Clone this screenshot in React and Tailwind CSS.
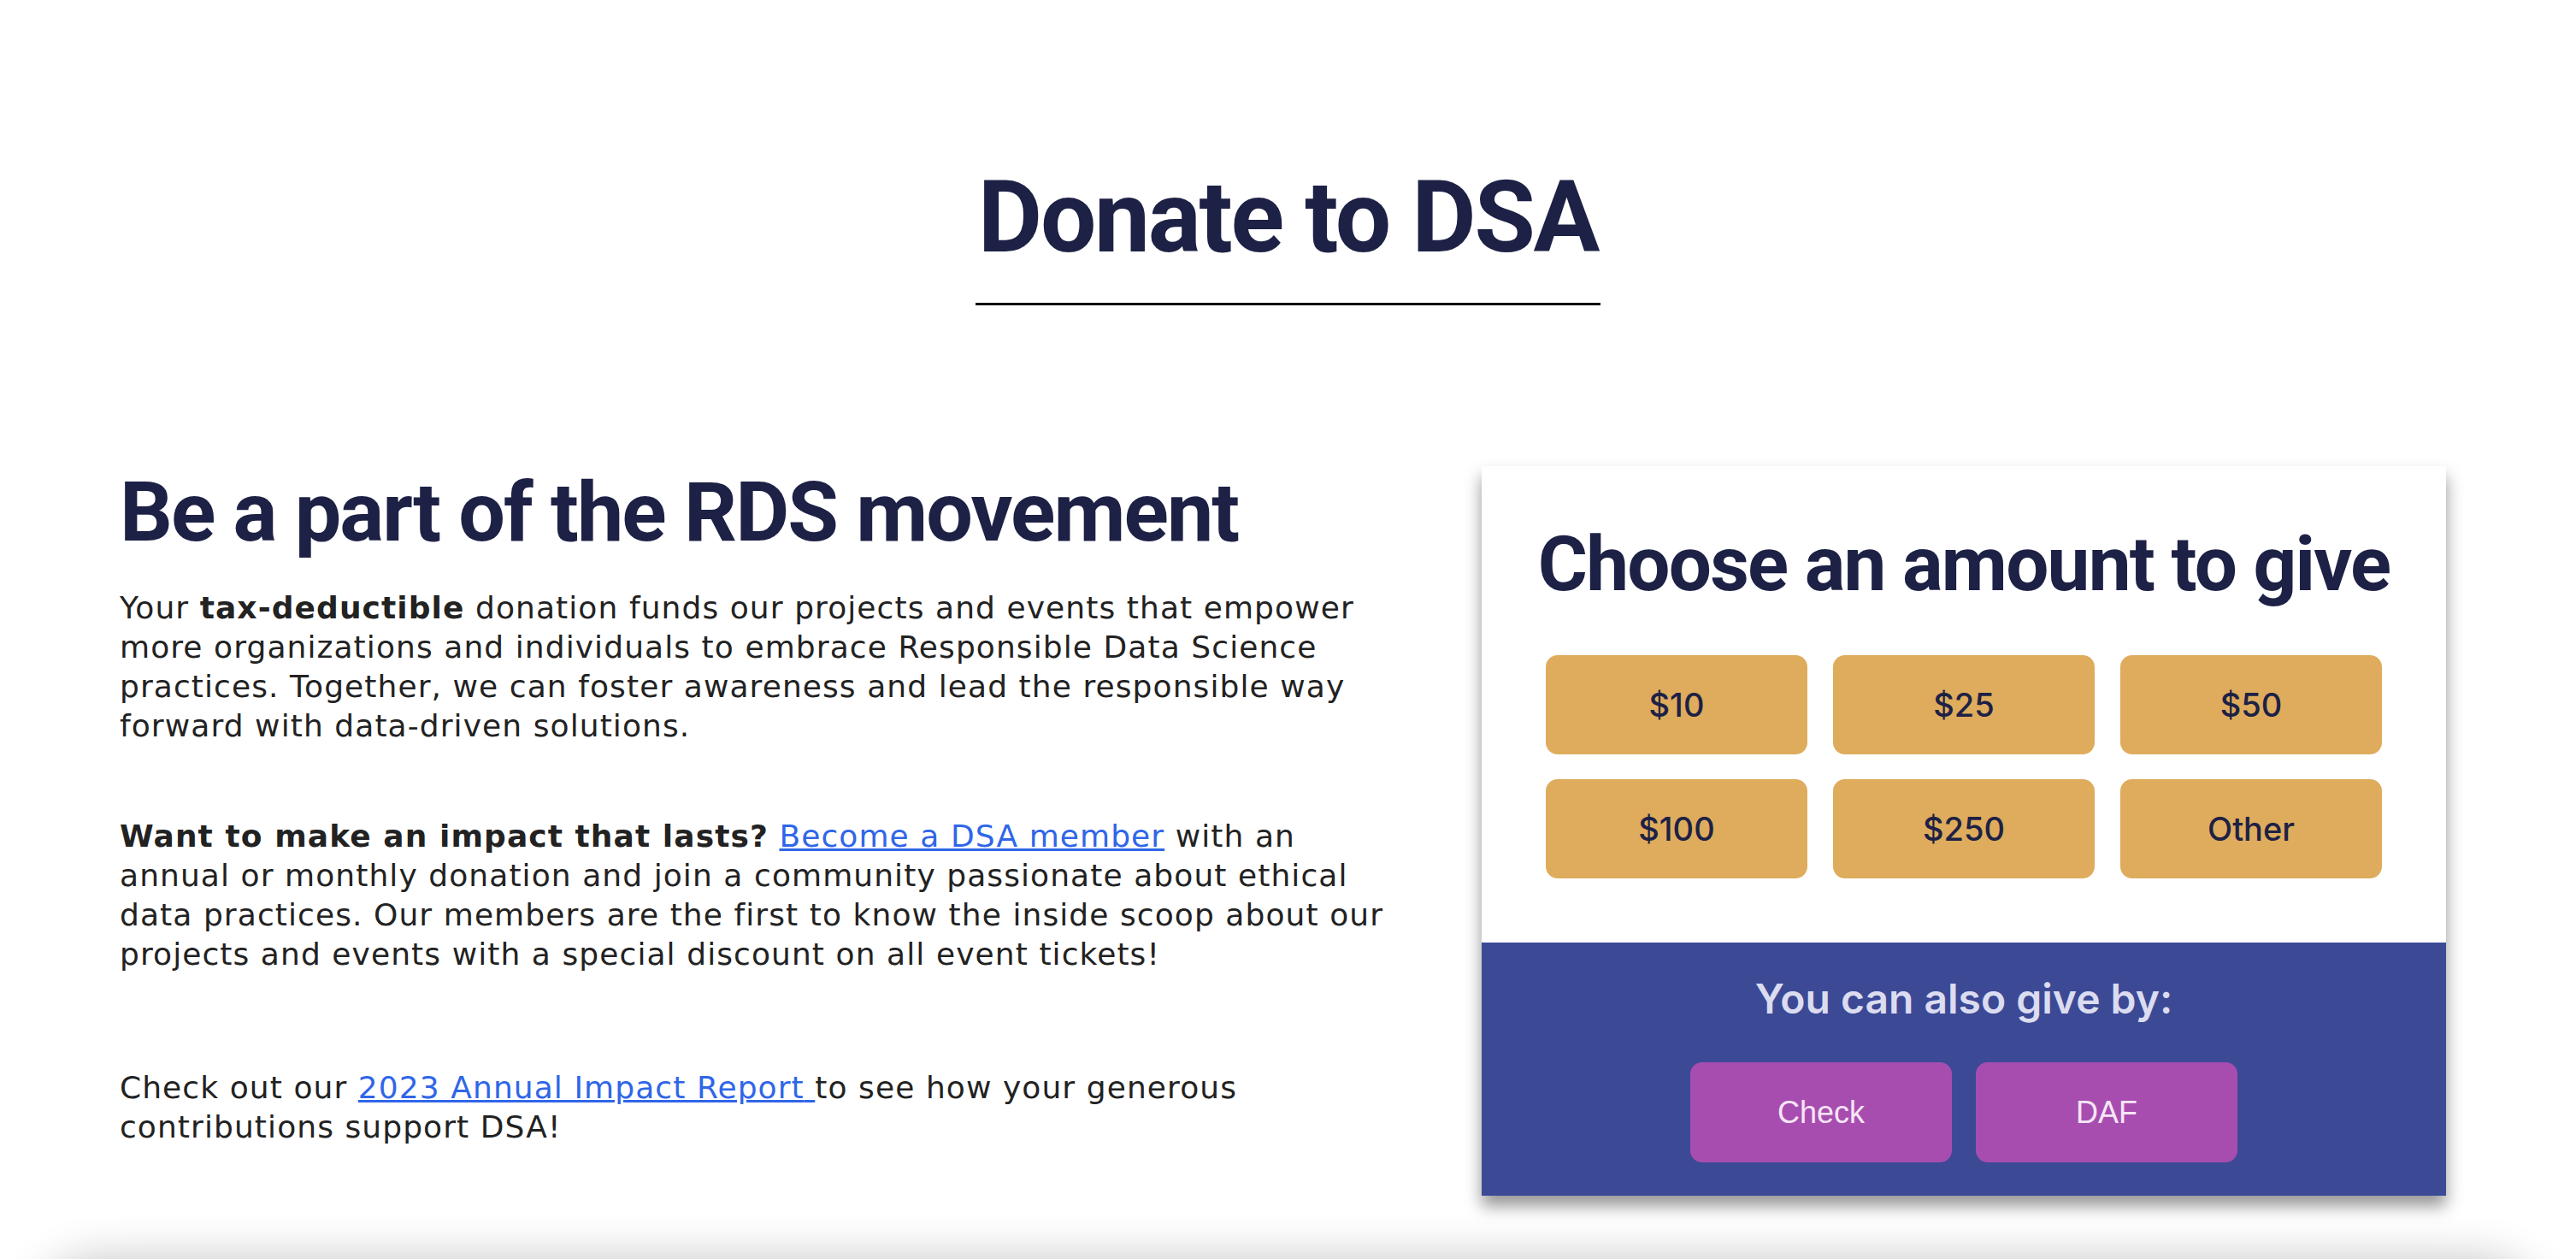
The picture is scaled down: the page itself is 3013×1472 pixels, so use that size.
import React from "react";

const HEAD = { fontFamily: "Roboto, 'Liberation Sans', sans-serif" };
const BODY = { fontFamily: "'DejaVu Sans', Inter, sans-serif" };
const UI = { fontFamily: "Inter, 'Open Sans', sans-serif" };

function Amount({ children }) {
  return (
    <button
      className="h-[116px] w-[306px] rounded-[14px] bg-[#deac5c] text-[38px] font-medium text-[#1d2145]"
      style={UI}
    >
      {children}
    </button>
  );
}

function Alt({ children }) {
  return (
    <button
      className="h-[117px] w-[306px] rounded-[14px] bg-[#a84db0] text-[36px] text-[#f6e6f6]"
      style={{ fontFamily: "'Liberation Sans', Arial, sans-serif" }}
    >
      {children}
    </button>
  );
}

export default function App() {
  return (
    <div className="relative min-h-screen overflow-hidden bg-white">
      <div className="flex justify-center pt-[196px]">
        <h1
          className="border-b-[3px] border-black px-[3px] pb-[42px] text-[116px] font-bold leading-none tracking-[-0.02em] text-[#1d2145]"
          style={HEAD}
        >
          Donate to DSA
        </h1>
      </div>

      <div className="mt-[178px] flex items-start justify-between pl-[140px] pr-[152px]">
        <div className="w-[1560px] pt-[16px] text-[36px] leading-[46px] tracking-[0.03em] text-[#222222]" style={BODY}>
          <h2
            className="mb-[40px] text-[97px] font-bold leading-none tracking-[-0.02em] text-[#1d2145]"
            style={HEAD}
          >
            Be a part of the RDS movement
          </h2>
          <p>
            Your <b>tax-deductible</b> donation funds our projects and events that empower
            <br />
            more organizations and individuals to embrace Responsible Data Science
            <br />
            practices. Together, we can foster awareness and lead the responsible way
            <br />
            forward with data-driven solutions.
          </p>
          <p className="mt-[83px]">
            <b>Want to make an impact that lasts?</b>{" "}
            <a href="#" className="text-[#2f66e8] underline">
              Become a DSA member
            </a>{" "}
            with an
            <br />
            annual or monthly donation and join a community passionate about ethical
            <br />
            data practices. Our members are the first to know the inside scoop about our
            <br />
            projects and events with a special discount on all event tickets!
          </p>
          <p className="mt-[110px]">
            Check out our{" "}
            <a href="#" className="text-[#2f66e8] underline">
              2023 Annual Impact Report{" "}
            </a>
            to see how your generous
            <br />
            contributions support DSA!
          </p>
        </div>

        <div className="mt-[10px] w-[1128px] bg-white shadow-[0_12px_18px_rgba(0,0,0,0.42)]">
          <div className="flex flex-col items-center pb-[75px] pt-[70px]">
            <h2
              className="text-[89px] font-bold leading-none tracking-[-0.02em] text-[#1d2145]"
              style={HEAD}
            >
              Choose an amount to give
            </h2>
            <div className="mt-[62px] grid grid-cols-3 gap-x-[30px] gap-y-[29px]">
              <Amount>$10</Amount>
              <Amount>$25</Amount>
              <Amount>$50</Amount>
              <Amount>$100</Amount>
              <Amount>$250</Amount>
              <Amount>Other</Amount>
            </div>
          </div>
          <div className="flex flex-col items-center bg-[#3c4a96] pb-[39px] pt-[42px]">
            <p className="text-[48px] font-semibold leading-none text-[#dcdcf0]" style={UI}>
              You can also give by:
            </p>
            <div className="mt-[50px] flex gap-[28px]">
              <Alt>Check</Alt>
              <Alt>DAF</Alt>
            </div>
          </div>
        </div>
      </div>

      <div className="mx-[30px] mt-[86px] h-[300px] rounded-[90px] bg-white shadow-[0_-16px_50px_rgba(0,0,0,0.2)]" />
    </div>
  );
}
